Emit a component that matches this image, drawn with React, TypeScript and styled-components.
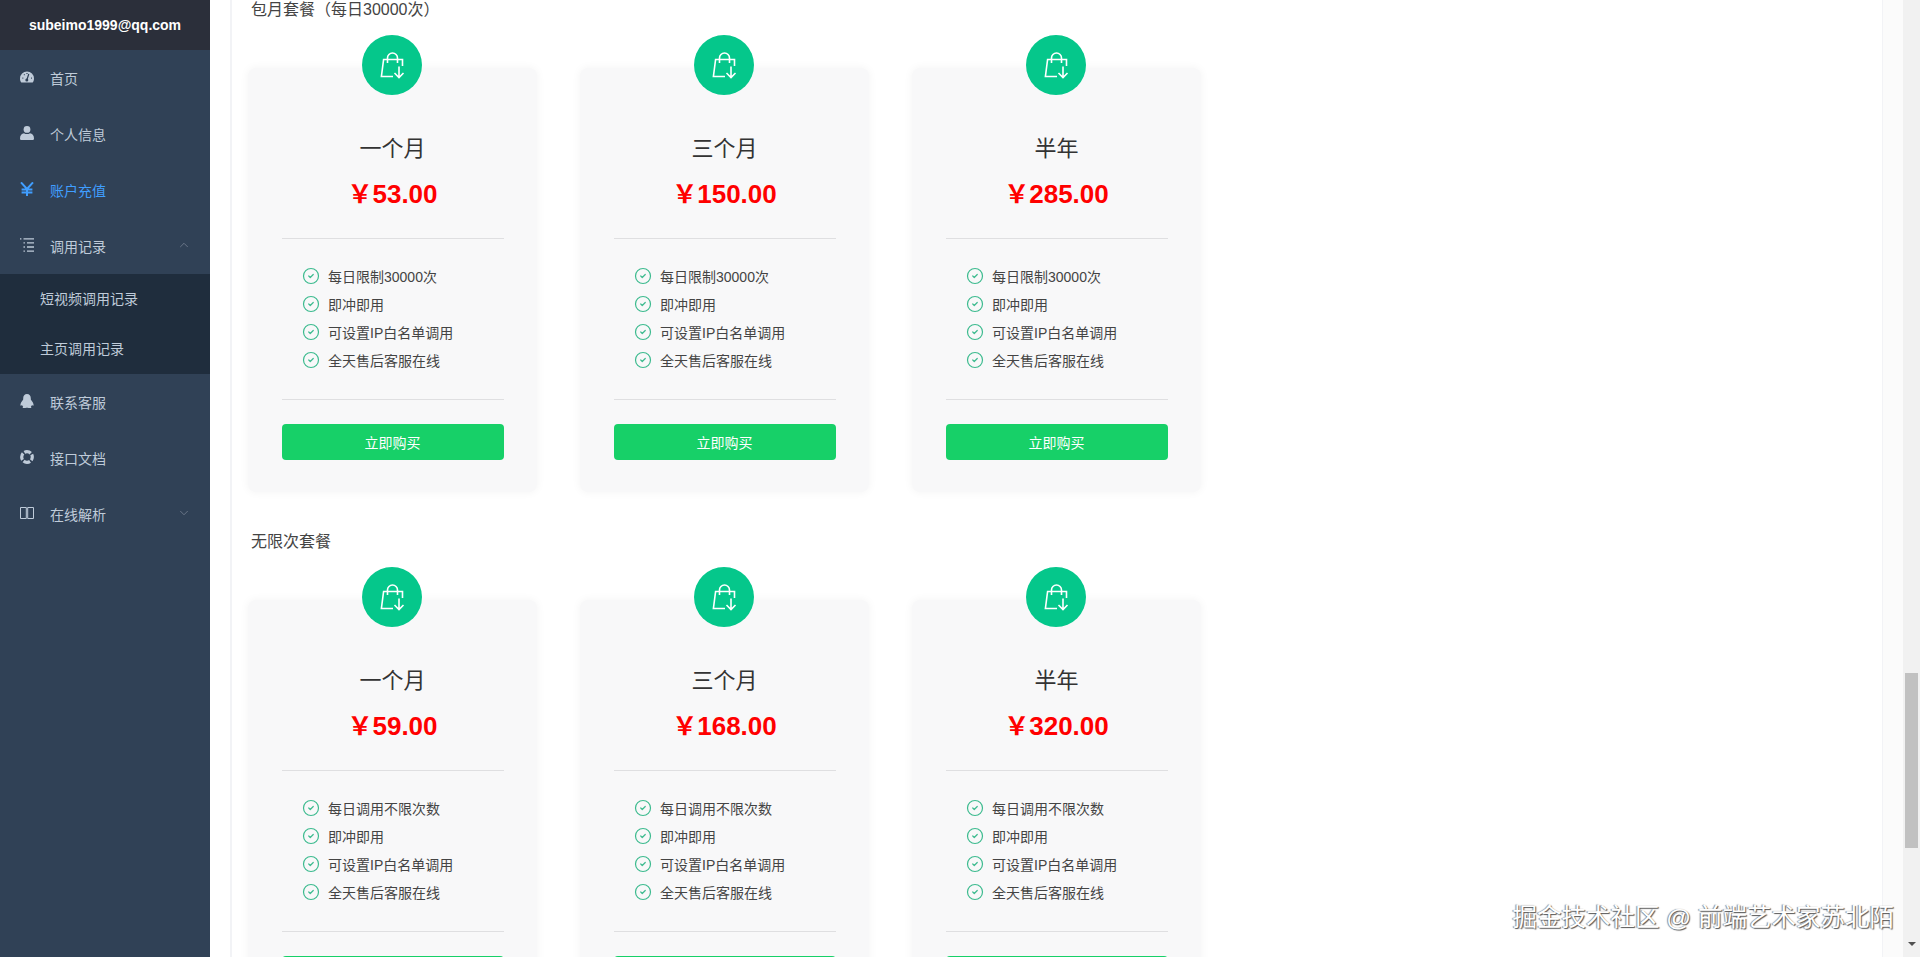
import React from "react";
import styled, { createGlobalStyle } from "styled-components";
import { ChevronDown, ChevronUp, CircleCheck } from "lucide-react";

const GlobalStyle = createGlobalStyle`
  html, body {
    margin: 0;
    height: 100%;
    overflow: hidden;
    background: #fff;
    font-family: "Liberation Sans", "Noto Sans CJK SC", sans-serif;
  }
  * {
    box-sizing: border-box;
  }
`;

const GaugeIcon = () => (
  <svg width="14" height="14" viewBox="0 0 14 14">
    <path fill="currentColor" d="M7 1.5a7 7 0 0 0-7 7c0 1.6.5 3 1.3 4h11.4c.8-1 1.3-2.4 1.3-4a7 7 0 0 0-7-7z" />
    <path stroke="#304156" strokeWidth="1.2" d="M7 9.5l1.8-5.5M2.4 8.2h.9M11 8.2h.9M4 4.4l.6.6M7 3v1" />
    <circle cx="6.8" cy="10" r="1.5" fill="#304156" />
  </svg>
);

const UserIcon = () => (
  <svg width="14" height="14" viewBox="0 0 14 14" fill="currentColor">
    <circle cx="7" cy="3.4" r="3.4" />
    <path d="M0 12.4c0-3.2 1.8-5 4-5.2.9.6 1.9.9 3 .9s2.1-.3 3-.9c2.2.2 4 2 4 5.2 0 1-.7 1.6-1.6 1.6H1.6C.7 14 0 13.4 0 12.4z" />
  </svg>
);

const YenIcon = () => (
  <svg width="14" height="14" viewBox="0 0 14 14" fill="none" stroke="currentColor" strokeWidth="2">
    <path d="M1 .4L7 7l6-6.6M7 7v7M1.6 7.6h10.8M1.6 10.6h10.8" />
  </svg>
);

const ListIcon = () => (
  <svg width="14" height="14" viewBox="0 0 14 14" fill="none" stroke="currentColor" strokeWidth="1.3">
    <path d="M0 .8h1.4M3.5 .8H14M3.5 4.9h1.4M7 4.9h7M3.5 9h1.4M7 9h7M3.5 13.1h1.4M7 13.1h7" />
  </svg>
);

const PenguinIcon = () => (
  <svg width="14" height="14" viewBox="0 0 14 14" fill="currentColor">
    <path d="M7 0C4.6 0 3.2 1.8 3.2 4.2c0 .6 0 1.1-.1 1.5C1.8 7.2.4 9.4.4 11c0 .9.7.9 1.6.1.3.7.7 1.2 1.2 1.6-.5.4-.7.7-.5 1 .3.4 2.2.5 3.4 0h1.8c1.2.5 3.1.4 3.4 0 .2-.3 0-.6-.5-1 .5-.4.9-.9 1.2-1.6.9.8 1.6.8 1.6-.1 0-1.6-1.4-3.8-2.7-5.3-.1-.4-.1-.9-.1-1.5C10.8 1.8 9.4 0 7 0z" />
  </svg>
);

const RingIcon = () => (
  <svg width="14" height="14" viewBox="0 0 14 14" fill="none" stroke="currentColor" strokeWidth="3.2">
    <circle cx="7" cy="7" r="5.3" strokeDasharray="6.8 1.53" strokeDashoffset="3.4" />
  </svg>
);

const BookIcon = () => (
  <svg width="14" height="14" viewBox="0 0 14 14" fill="none" stroke="currentColor" strokeWidth="1">
    <path d="M.5 1.5h5.8v11H.5zM7.7 1.5h5.8v11H7.7z" />
  </svg>
);

const BagIcon = () => (
  <svg width="25" height="27" viewBox="0 0 25 27" fill="none" stroke="#fff" strokeWidth="1.6">
    <path d="M22.5 14V7.5H3.6L1.4 24.5H13" />
    <path d="M7.5 11V6a5 5 0 0 1 10 0v5" />
    <path d="M19 14.5v10.5M14.5 21l4.5 4.5 4.5-4.5" />
  </svg>
);

type MenuEntry = { label: string; icon: React.ReactNode; active?: boolean; arrow?: "up" | "down"; children?: string[] };

const menu: MenuEntry[] = [
  { label: "首页", icon: <GaugeIcon /> },
  { label: "个人信息", icon: <UserIcon /> },
  { label: "账户充值", icon: <YenIcon />, active: true },
  { label: "调用记录", icon: <ListIcon />, arrow: "up", children: ["短视频调用记录", "主页调用记录"] },
  { label: "联系客服", icon: <PenguinIcon /> },
  { label: "接口文档", icon: <RingIcon /> },
  { label: "在线解析", icon: <BookIcon />, arrow: "down" },
];

type Plan = { name: string; price: string };

const monthly: Plan[] = [
  { name: "一个月", price: "53.00" },
  { name: "三个月", price: "150.00" },
  { name: "半年", price: "285.00" },
];

const unlimited: Plan[] = [
  { name: "一个月", price: "59.00" },
  { name: "三个月", price: "168.00" },
  { name: "半年", price: "320.00" },
];

const PlanSection = ({ title, plans, limit }: { title: string; plans: Plan[]; limit: string }) => (
  <Section>
    <SectionTitle>{title}</SectionTitle>
    <CardRow>
      {plans.map((plan) => (
        <Card key={plan.name}>
          <Badge>
            <BagIcon />
          </Badge>
          <PlanName>{plan.name}</PlanName>
          <Price>
            <Yen>￥</Yen>
            {plan.price}
          </Price>
          <Features>
            {[limit, "即冲即用", "可设置IP白名单调用", "全天售后客服在线"].map((text) => (
              <Feature key={text}>
                <CircleCheck size={18} strokeWidth={1.6} color="#3dbb8f" />
                {text}
              </Feature>
            ))}
          </Features>
          <BuyButton>立即购买</BuyButton>
        </Card>
      ))}
    </CardRow>
  </Section>
);

export default function App() {
  return (
    <Page>
      <GlobalStyle />
      <Sidebar>
        <Account>subeimo1999@qq.com</Account>
        {menu.map((item) => (
          <React.Fragment key={item.label}>
            <MenuItem $active={item.active}>
              <MenuIcon>{item.icon}</MenuIcon>
              {item.label}
              {item.arrow && (
                <MenuArrow>
                  {item.arrow === "up" ? <ChevronUp size={14} strokeWidth={1} /> : <ChevronDown size={14} strokeWidth={1} />}
                </MenuArrow>
              )}
            </MenuItem>
            {item.children && (
              <SubMenu>
                {item.children.map((child) => (
                  <SubItem key={child}>{child}</SubItem>
                ))}
              </SubMenu>
            )}
          </React.Fragment>
        ))}
      </Sidebar>
      <Main>
        <Panel>
          <PlanSection title="包月套餐（每日30000次）" plans={monthly} limit="每日限制30000次" />
          <PlanSection title="无限次套餐" plans={unlimited} limit="每日调用不限次数" />
        </Panel>
        <Gutter />
      </Main>
      <Scrollbar>
        <ScrollThumb />
        <ScrollArrow />
      </Scrollbar>
      <Watermark>掘金技术社区 @ 前端艺术家苏北陌</Watermark>
    </Page>
  );
}

const Page = styled.div`
  display: flex;
  width: 1920px;
  height: 957px;
  overflow: hidden;
`;

const Sidebar = styled.aside`
  flex: 0 0 210px;
  background: #304156;
  font-size: 14px;
`;

const Account = styled.div`
  height: 50px;
  line-height: 50px;
  text-align: center;
  background: #2b2f3a;
  color: #fff;
  font-weight: bold;
  font-size: 14px;
`;

const MenuItem = styled.div<{ $active?: boolean }>`
  position: relative;
  display: flex;
  align-items: center;
  height: 56px;
  padding-left: 20px;
  color: ${(p) => (p.$active ? "#409eff" : "#bfcbd9")};
`;

const MenuIcon = styled.span`
  display: flex;
  align-items: center;
  justify-content: center;
  width: 14px;
  height: 14px;
  margin-right: 16px;
  margin-top: -2px;
`;

const MenuArrow = styled.span`
  display: flex;
  margin-left: auto;
  margin-right: 19px;
  margin-top: -3px;
  color: #909aa8;
`;

const SubMenu = styled.div`
  background: #1f2d3d;
`;

const SubItem = styled.div`
  height: 50px;
  line-height: 50px;
  padding-left: 40px;
  color: #bfcbd9;
`;

const Main = styled.main`
  flex: 1;
  display: flex;
  padding-left: 20px;
  min-width: 0;
`;

const Panel = styled.div`
  flex: 1;
  padding-left: 16px;
  border-left: 2px solid #f2f3f6;
  border-right: 1px solid #f2f3f6;
  overflow: hidden;
`;

const Gutter = styled.div`
  flex: 0 0 20px;
  background: #fbfbfb;
`;

const Section = styled.section`
  height: 532px;
`;

const SectionTitle = styled.div`
  height: 35px;
  padding: 2px 0 0 3px;
  margin-bottom: 33px;
  line-height: 16px;
  font-size: 16px;
  color: #444;
`;

const CardRow = styled.div`
  display: flex;
  gap: 43px;
`;

const Card = styled.div`
  position: relative;
  width: 289px;
  height: 424px;
  padding: 66px 33.5px 0;
  background: #f8f8f9;
  border-radius: 8px;
  box-shadow: 0 0 10px rgba(0, 0, 0, 0.05);
  text-align: center;
`;

const Badge = styled.div`
  position: absolute;
  top: -33px;
  left: 114px;
  display: flex;
  align-items: center;
  justify-content: center;
  width: 60px;
  height: 60px;
  border-radius: 50%;
  background: #05c78b;
`;

const PlanName = styled.div`
  height: 30px;
  line-height: 30px;
  font-size: 22px;
  color: #333;
`;

const Price = styled.div`
  height: 36px;
  line-height: 36px;
  margin: 12px 0 26px;
  font-size: 26px;
  font-weight: bold;
  color: #f00;
`;

const Yen = styled.span`
  font-size: 25px;
`;

const Features = styled.ul`
  list-style: none;
  margin: 0;
  padding: 23px 0 25px 20px;
  border-top: 1px solid #dfdfe1;
  border-bottom: 1px solid #dfdfe1;
`;

const Feature = styled.li`
  display: flex;
  align-items: center;
  gap: 8.5px;
  height: 28px;
  font-size: 14px;
  color: #444;
`;

const BuyButton = styled.button`
  display: block;
  width: 100%;
  height: 36px;
  margin-top: 24px;
  border: 0;
  border-radius: 4px;
  background: #17d068;
  color: #fff;
  font: inherit;
  font-size: 14px;
`;

const Scrollbar = styled.div`
  flex: 0 0 17px;
  display: flex;
  flex-direction: column;
  align-items: center;
  padding-top: 673px;
  background: #f1f1f1;
`;

const ScrollThumb = styled.div`
  width: 13px;
  height: 175px;
  background: #c1c1c1;
`;

const ScrollArrow = styled.div`
  width: 0;
  height: 0;
  margin-top: 94px;
  border-left: 4px solid transparent;
  border-right: 4px solid transparent;
  border-top: 4px solid #505050;
`;

const Watermark = styled.div`
  position: absolute;
  right: 26px;
  top: 900px;
  font-size: 24.5px;
  line-height: 36px;
  white-space: nowrap;
  color: #fff;
  text-shadow: 1px 1px 1px #555, -1px 0 1px #888;
`;
